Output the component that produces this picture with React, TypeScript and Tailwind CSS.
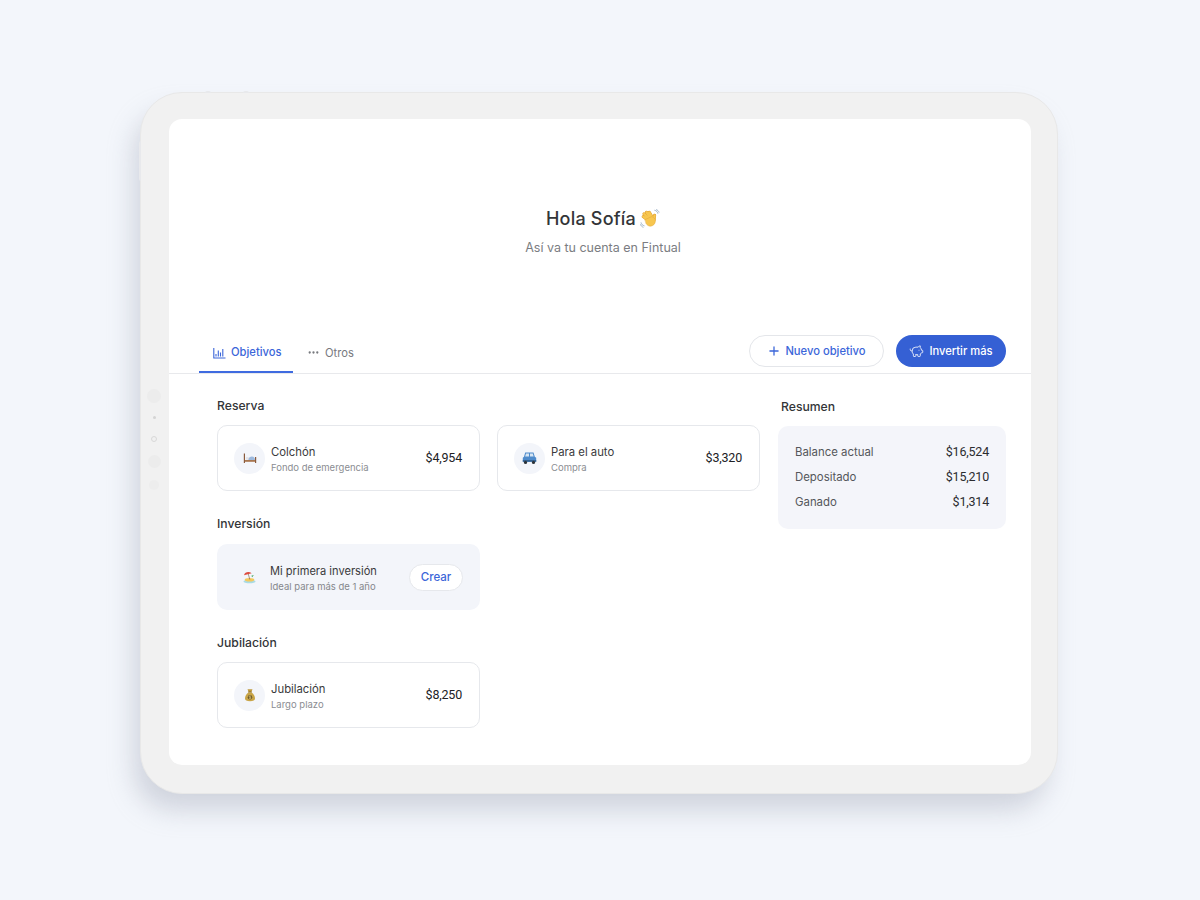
import { Ellipsis, PiggyBank, Plus } from "lucide-react";
import type { ReactNode } from "react";

const font = "font-['Inter','Noto_Sans',sans-serif]";
const num = "font-['Roboto',sans-serif]";

const Wave = () => (
  <svg width="20" height="20" viewBox="0 0 20 20" strokeLinecap="round" fill="none">
    <g stroke="#dc9a2e" strokeWidth="3.100">
      <path d="m10 11-6-6.200M9 12 3.200 7.600M11.500 10 6.500 3.300M13 9.500 9.300 3.400M14 11l.6-4.700" />
    </g>
    <g stroke="#f7c64f" strokeWidth="2.300">
      <path d="m10 11-6-6.200M9 12 3.200 7.600M11.500 10 6.500 3.300M13 9.500 9.300 3.400M14 11l.6-4.700" />
    </g>
    <path d="M5.200 10.500 12 7.500l3.200 2.500c.6 3.100-.4 5.300-2.500 6.500-2.700 1.400-5 .4-6.500-1.700z" fill="#f7c64f" stroke="#e3a636" strokeWidth=".5" />
    <path d="M14.800 1.300c1.500.3 2.700 1.500 3 3M16.500.7c1.200.4 2.100 1.300 2.500 2.500M1.100 13.800c.3 1.500 1.500 2.700 3 3M.6 15.700c.4 1.200 1.300 2.100 2.500 2.500" stroke="#8aa3bd" strokeWidth=".8" />
  </svg>
);

const Bed = () => (
  <svg width="14" height="14" viewBox="0 0 14 14">
    <rect x=".8" y="2.500" width="1.200" height="9.500" fill="#8a5a3c" />
    <rect x="12" y="6" width="1.200" height="6" fill="#8a5a3c" />
    <rect x="2" y="9" width="10" height="1.800" fill="#a8764f" />
    <rect x="2.800" y="6" width="3" height="2.700" rx=".8" fill="#e6e4e6" />
    <path d="M5.300 9c.3-2.600 2-3.500 3.600-3.500 2.100 0 3.100 1.300 3.100 3.500z" fill="#9db9dd" />
  </svg>
);

const Car = () => (
  <svg width="15" height="14" viewBox="0 0 15 14">
    <path d="M3.200 1.500h8.300l1.300 4.300 1.400.9V11H.8V6.700l1.200-.9z" fill="#4f8bcb" />
    <path d="M4 2.500h3v3H3.100zM8 2.500h2.800l.9 3H8z" fill="#d7e6f3" />
    <rect x=".8" y="9" width="13.400" height="1.600" fill="#35618f" />
    <circle cx="3.500" cy="11.400" r="1.600" fill="#2c3238" />
    <circle cx="11.500" cy="11.400" r="1.600" fill="#2c3238" />
  </svg>
);

const Beach = () => (
  <svg width="14" height="14" viewBox="0 0 14 14">
    <ellipse cx="7.500" cy="11.500" rx="6" ry="1.800" fill="#a9dbe4" />
    <ellipse cx="7.500" cy="9.800" rx="4.800" ry="1.800" fill="#f4c95d" />
    <path d="m6.300 4 1.500 5.500" stroke="#8a6a4a" strokeWidth=".7" />
    <path d="M2 5.200C2.800 2.200 6.600 1 9.700 3.200z" fill="#dd4b3e" />
    <path d="m9.300 5.700 2.500-.7-1.500 2.300z" fill="#43a863" />
  </svg>
);

const MoneyBag = () => (
  <svg width="12" height="14" viewBox="0 0 12 14">
    <path d="M3.500 1.200h5L7.400 4.100H4.600z" fill="#bf9a3f" />
    <rect x="4.200" y="3.600" width="3.600" height="1" fill="#7d6327" />
    <path d="M4.300 4.600h3.400c2 1.400 3.300 3.700 3.300 5.900 0 2-1.800 2.700-5 2.700s-5-.7-5-2.700c0-2.200 1.300-4.500 3.300-5.900z" fill="#c9a548" />
    <circle cx="6" cy="9.200" r="2.200" fill="#6d5a28" />
    <path d="M6.900 8.300c-.9-.6-1.900-.3-1.800.4s1.900.5 1.900 1.200-1.100 1-2 .4M6 7.500v3.400" fill="none" stroke="#e8d28f" strokeWidth=".5" />
  </svg>
);

const Chart = () => (
  <svg width="13" height="12" viewBox="0 0 13 12" fill="none" stroke="#3b66d9" strokeWidth="1.100">
    <path d="M.8 1v10h11.700M3 7v2.500M5.300 3.500v6M7.500 5.500v4M9.800 2v7.500" />
  </svg>
);

function Goal({ icon, title, sub, amount }: { icon: ReactNode; title: string; sub: string; amount: string }) {
  return (
    <div className="flex h-[66px] w-[263px] items-center rounded-[10px] border border-[#e6e8ec] bg-white pl-[16px] pr-[17px]">
      <div className="flex h-[31px] w-[31px] shrink-0 items-center justify-center rounded-full bg-[#f3f5fa]">{icon}</div>
      <div className="ml-[6px] flex-1 pt-[3px]">
        <div className="text-[11.3px] leading-[15px] text-[#3a3a3c]">{title}</div>
        <div className="mt-[1px] text-[9.5px] leading-[14px] text-[#8b8d92]">{sub}</div>
      </div>
      <div className={`${num} text-[12.5px] tracking-[-0.2px] text-[#202124]`}>{amount}</div>
    </div>
  );
}

function SectionTitle({ children }: { children: ReactNode }) {
  return <div className="h-[21px] text-[12.2px] font-medium leading-[21px] text-[#333538]">{children}</div>;
}

function Row({ label, value }: { label: string; value: string }) {
  return (
    <div className="flex h-[25px] items-center justify-between">
      <span className="text-[11.4px] text-[#55575b]">{label}</span>
      <span className={`${num} text-[12.5px] tracking-[-0.2px] text-[#2b2c2f]`}>{value}</span>
    </div>
  );
}

export default function App() {
  return (
    <div className={`${font} h-[900px] w-[1200px] overflow-hidden bg-[#f3f6fb] pl-[140px] pt-[92px]`}>
      <div className="relative flex h-[702px] w-[918px] rounded-[42px] border border-[#e8e8e8] bg-[#f1f1f1] pb-[28px] pr-[26px] pt-[26px] shadow-[-8px_18px_26px_-2px_rgba(160,165,180,0.42)]">
        <div className="absolute -left-[2px] top-[48px] h-[40px] w-[2px] rounded-l-sm bg-[#e8e9ec]" />
        <div className="absolute -top-[2px] left-[64px] h-[2px] w-[6px] rounded-t-sm bg-[#e8e9ec]" />
        <div className="absolute -top-[2px] left-[102px] h-[2px] w-[6px] rounded-t-sm bg-[#e8e9ec]" />
        <div className="flex w-[28px] shrink-0 flex-col items-center pr-[2px] pt-[270px]">
          <div className="h-[14px] w-[14px] rounded-full bg-[#ececec]" />
          <div className="mt-[13px] h-[3px] w-[3px] rounded-full bg-[#d4d4d4]" />
          <div className="mt-[17px] h-[6px] w-[6px] rounded-full border border-[#d8d8d8] bg-[#f1f1f1]" />
          <div className="mt-[13px] h-[13px] w-[13px] rounded-full bg-[#ececec]" />
          <div className="mt-[12px] h-[10px] w-[10px] rounded-full bg-[#ededed]" />
        </div>
        <div className="flex-1 rounded-[13px] bg-white">
          <div className="flex h-[215px] flex-col items-center pl-[6px] pt-[88px]">
            <div className="flex items-center gap-[4px]">
              <span className="text-[18px] font-medium leading-[24px] tracking-[0.2px] text-[#333538]">Hola Sofía</span>
              <Wave />
            </div>
            <div className="mt-[7px] text-[12.5px] leading-[20px] text-[#7b7d82]">Así va tu cuenta en Fintual</div>
          </div>
          <div className="flex h-[40px] items-start justify-between border-b border-[#e8e9ec] pl-[30px] pr-[25px]">
            <div className="flex h-[39px] items-center">
              <div className="flex h-[39px] w-[94px] items-center gap-[5px] border-b-2 border-[#3f6be0] pl-[14px] text-[11.2px] font-medium text-[#3b66d9]">
                <Chart />
                <span>Objetivos</span>
              </div>
              <div className="ml-[14px] flex items-center gap-[5px] pb-[1px] text-[11.2px] text-[#77797e]">
                <Ellipsis size={13} strokeWidth={2.200} />
                <span>Otros</span>
              </div>
            </div>
            <div className="mt-[1px] flex gap-[12px]">
              <div className="flex h-[32px] w-[135px] items-center justify-center gap-[4px] rounded-full border border-[#e4e6ea] bg-white text-[11.2px] font-medium text-[#3b66d9]">
                <Plus size={14} strokeWidth={2.200} />
                <span>Nuevo objetivo</span>
              </div>
              <div className="flex h-[32px] w-[110px] items-center justify-center gap-[5px] rounded-full bg-[#3560d4] text-[11.2px] font-medium text-white">
                <PiggyBank size={15} strokeWidth={1.300} />
                <span>Invertir más</span>
              </div>
            </div>
          </div>
          <div className="flex pl-[48px] pt-[21px]">
            <div className="w-[544px]">
              <SectionTitle>Reserva</SectionTitle>
              <div className="mt-[9px] flex gap-[17px]">
                <Goal icon={<Bed />} title="Colchón" sub="Fondo de emergencia" amount="$4,954" />
                <Goal icon={<Car />} title="Para el auto" sub="Compra" amount="$3,320" />
              </div>
              <div className="mt-[22px]">
                <SectionTitle>Inversión</SectionTitle>
              </div>
              <div className="mt-[10px] flex h-[66px] w-[263px] items-center rounded-[10px] bg-[#f3f5fa] pl-[16px] pr-[17px]">
                <div className="flex h-[31px] w-[31px] shrink-0 items-center justify-center"><Beach /></div>
                <div className="ml-[6px] flex-1 pt-[3px]">
                  <div className="text-[11.1px] leading-[15px] text-[#3a3a3c]">Mi primera inversión</div>
                  <div className="mt-[1px] text-[9.5px] leading-[14px] text-[#85878c]">Ideal para más de 1 año</div>
                </div>
                <div className="flex h-[27px] w-[54px] items-center justify-center rounded-full border border-[#e6e8ec] bg-white pt-[1px] text-[11.5px] font-medium text-[#3b66d9]">Crear</div>
              </div>
              <div className="mt-[22px]">
                <SectionTitle>Jubilación</SectionTitle>
              </div>
              <div className="mt-[9px]">
                <Goal icon={<MoneyBag />} title="Jubilación" sub="Largo plazo" amount="$8,250" />
              </div>
            </div>
            <div className="ml-[17px] w-[228px]">
              <div className="pl-[3px] pt-[1px]"><SectionTitle>Resumen</SectionTitle></div>
              <div className="mt-[9px] h-[103px] rounded-[10px] bg-[#f4f5fa] pl-[17px] pr-[17px] pt-[14px]">
                <Row label="Balance actual" value="$16,524" />
                <Row label="Depositado" value="$15,210" />
                <Row label="Ganado" value="$1,314" />
              </div>
            </div>
          </div>
        </div>
      </div>
    </div>
  );
}
